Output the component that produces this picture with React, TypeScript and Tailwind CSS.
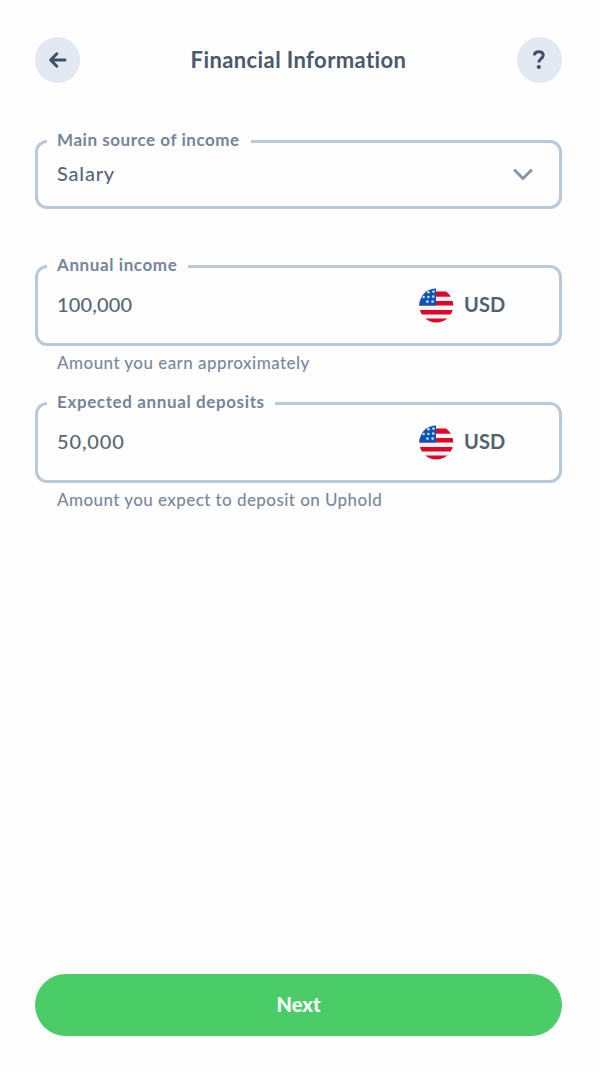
import type { ReactNode } from "react";

function Flag() {
  return (
    <svg width="35" height="35" viewBox="0 0 35 35" className="shrink-0">
      <clipPath id="flag">
        <circle cx="17.3" cy="17.5" r="17" />
      </clipPath>
      <g clipPath="url(#flag)">
        <rect width="35" height="35" fill="#f4f3f5" />
        <rect y="3.5" width="35" height="5.2" fill="#dd0828" />
        <rect y="13" width="35" height="4.5" fill="#dd0828" />
        <rect y="22" width="35" height="4.5" fill="#dd0828" />
        <rect y="30.5" width="35" height="4.5" fill="#dd0828" />
        <rect width="17" height="17.5" fill="#0c55b5" />
        <g fill="#c7dcf3">
          <circle cx="9.4" cy="4.2" r="1.3" />
          <circle cx="14.5" cy="3.6" r="1.3" />
          <circle cx="4.6" cy="9" r="1.3" />
          <circle cx="9.4" cy="9" r="1.3" />
          <circle cx="14.3" cy="8.6" r="1.3" />
          <circle cx="8.4" cy="13.6" r="1.3" />
          <circle cx="13.6" cy="13.6" r="1.3" />
        </g>
      </g>
    </svg>
  );
}

function Currency() {
  return (
    <div className="flex items-center gap-[10px]">
      <Flag />
      <span className="w-[42px] pb-[2px] text-[20px] font-bold tracking-[0.1px] text-[#536171]">USD</span>
    </div>
  );
}

function Field({
  label,
  className,
  labelClass,
  children,
}: {
  label: string;
  className: string;
  labelClass: string;
  children: ReactNode;
}) {
  return (
    <fieldset className={`min-w-0 rounded-[12px] border-[3px] border-[#b9c9da] pl-[9px] ${className}`}>
      <legend
        className={`h-[19px] whitespace-nowrap pl-[10px] text-[17px] font-bold leading-[16px] text-[#75859b] ${labelClass}`}
      >
        {label}
      </legend>
      {children}
    </fieldset>
  );
}

export default function App() {
  return (
    <div className="flex h-[1072px] w-[600px] flex-col bg-[#fefefe] pl-[35px] pr-[38px] pt-[37px] font-['Lato',sans-serif]">
      <header className="flex h-[46px] items-center justify-between">
        <button className="flex h-[46px] w-[45px] items-center justify-center rounded-full bg-[#e2e9f2]">
          <svg width="20" height="20" viewBox="0 0 20 20" fill="none" stroke="#435064" strokeWidth="3" strokeLinecap="round" strokeLinejoin="round">
            <path d="M17 10H3M8.8 3.8 2.6 10l6.2 6.2" />
          </svg>
        </button>
        <h1 className="whitespace-nowrap pb-[2px] text-[22px] font-bold tracking-[0.4px] text-[#4b596c]">Financial Information</h1>
        <button className="flex h-[46px] w-[45px] items-center justify-center rounded-full bg-[#e2e9f2]">
          <svg width="14" height="22" viewBox="0 0 14 22" fill="none" stroke="#435064" strokeWidth="3">
            <path d="M2.3 6.4C2.5 3.8 4.3 2.7 6.7 2.7c2.7 0 4.5 1.3 4.5 3.6 0 3.3-4.4 3.3-4.4 7.2" />
            <circle cx="6.8" cy="18" r="2.1" fill="#435064" stroke="none" />
          </svg>
        </button>
      </header>

      <Field label="Main source of income" className="mt-[49px] h-[77px]" labelClass="w-[204px] tracking-[0.55px]">
        <div className="flex h-[46px] items-center justify-between pl-[10px] pr-[26px]">
          <span className="pb-[2px] text-[20px] font-medium tracking-[0.8px] text-[#5a6778]">Salary</span>
          <svg width="20" height="14" viewBox="0 0 20 14" fill="none" stroke="#8494aa" strokeWidth="3" strokeLinecap="round" strokeLinejoin="round" className="mt-[2px]">
            <path d="m2 2.5 8 8 8-8" />
          </svg>
        </div>
      </Field>

      <Field label="Annual income" className="mt-[48px] h-[89px]" labelClass="w-[141px] tracking-[0.6px]">
        <div className="flex h-[58px] items-center justify-between pl-[10px] pr-[53px]">
          <span className="pb-[2px] text-[20px] font-medium tracking-[0.15px] text-[#5a6778]">100,000</span>
          <Currency />
        </div>
      </Field>
      <p className="mt-[5px] h-[25px] whitespace-nowrap pl-[22px] text-[17px] font-medium leading-[24px] tracking-[0.45px] text-[#7b899d]">
        Amount you earn approximately
      </p>

      <Field label="Expected annual deposits" className="mt-[18px] h-[89px]" labelClass="w-[228px] tracking-[0.62px]">
        <div className="flex h-[58px] items-center justify-between pl-[10px] pr-[53px]">
          <span className="pb-[2px] text-[20px] font-medium tracking-[0.85px] text-[#5a6778]">50,000</span>
          <Currency />
        </div>
      </Field>
      <p className="mt-[5px] h-[25px] whitespace-nowrap pl-[22px] text-[17px] font-medium leading-[24px] tracking-[0.43px] text-[#7b899d]">
        Amount you expect to deposit on Uphold
      </p>

      <footer className="mb-[36px] mt-auto border-t border-[#fbfcfc] pt-[50px]">
        <button className="block h-[62px] w-full rounded-full bg-[#4acd67] pb-[2px] text-[20px] font-black text-[#f8fff9]">
          Next
        </button>
      </footer>
    </div>
  );
}
